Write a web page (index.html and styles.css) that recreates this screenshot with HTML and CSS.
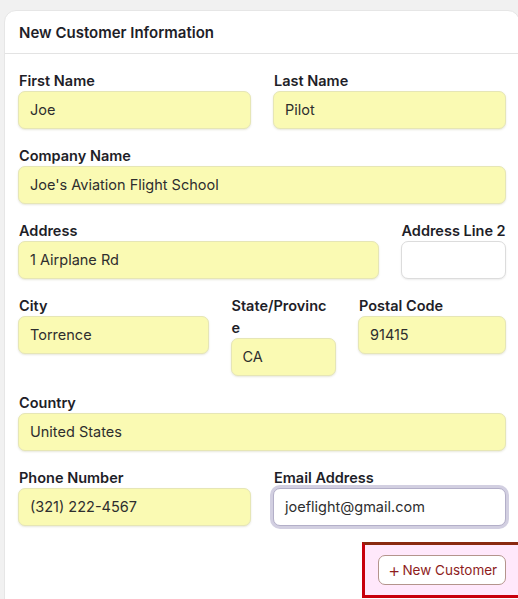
FILE: index.html
```html
<!DOCTYPE html>
<html lang="en">
<head>
<meta charset="utf-8">
<title>New Customer Information</title>
<link rel="stylesheet" href="styles.css">
</head>
<body>
<div class="card">
  <div class="card-header">New Customer Information</div>
  <div class="card-body">
    <div class="row">
      <div class="col col-6">
        <label class="lbl">First Name</label>
        <div class="inp fill">Joe</div>
      </div>
      <div class="col col-6">
        <label class="lbl">Last Name</label>
        <div class="inp fill">Pilot</div>
      </div>
    </div>
    <div class="row">
      <div class="col col-12">
        <label class="lbl">Company Name</label>
        <div class="inp fill">Joe's Aviation Flight School</div>
      </div>
    </div>
    <div class="row">
      <div class="col col-9">
        <label class="lbl">Address</label>
        <div class="inp fill">1 Airplane Rd</div>
      </div>
      <div class="col col-3">
        <label class="lbl nowrap">Address Line 2</label>
        <div class="inp empty"></div>
      </div>
    </div>
    <div class="row">
      <div class="col col-5">
        <label class="lbl">City</label>
        <div class="inp fill">Torrence</div>
      </div>
      <div class="col col-3">
        <label class="lbl">State/Provinc e</label>
        <div class="inp fill">CA</div>
      </div>
      <div class="col col-4">
        <label class="lbl">Postal Code</label>
        <div class="inp fill">91415</div>
      </div>
    </div>
    <div class="row">
      <div class="col col-12">
        <label class="lbl">Country</label>
        <div class="inp fill">United States</div>
      </div>
    </div>
    <div class="row">
      <div class="col col-6">
        <label class="lbl">Phone Number</label>
        <div class="inp fill">(321) 222-4567</div>
      </div>
      <div class="col col-6">
        <label class="lbl">Email Address</label>
        <div class="inp focus">joeflight@gmail.com</div>
      </div>
    </div>
    <div class="actions">
      <div class="highlight">
        <button class="btn" type="button"><span class="plus">+</span>New Customer</button>
      </div>
    </div>
  </div>
</div>
</body>
</html>
```
FILE: styles.css
```css
* { box-sizing: border-box; }
html, body { margin: 0; padding: 0; }
body {
  background: #f1f1f1;
  width: 518px;
  height: 599px;
  overflow: hidden;
  font-family: Inter, "Noto Sans", sans-serif;
  color: #1e1e28;
}
.card {
  margin: 10px 0 0 4px;
  width: 516px;
  height: 620px;
  background: #fff;
  border: 1px solid #e6e6e6;
  border-radius: 12px;
}
.card-header {
  height: 43px;
  padding: 12px 0 0 14px;
  font-size: 15px;
  font-weight: 600;
  line-height: 20px;
  border-bottom: 1px solid #e3e3e3;
  color: #1e1e28;
}
.card-body {
  padding: 16px 13px 0 13px;
}
.row {
  display: flex;
  margin: 0 -11px 16px;
}
.col { padding: 0 11px; }
.col-12 { width: 100%; }
.col-9 { width: 75%; }
.col-6 { width: 50%; }
.col-5 { width: 41.6667%; }
.col-4 { width: 33.3333%; }
.col-3 { width: 25%; }
.lbl {
  display: block;
  font-size: 14.5px;
  font-weight: 600;
  line-height: 22px;
  margin-bottom: -1px;
  padding-left: 1px;
  color: #1e1e28;
}
.nowrap { white-space: nowrap; }
.inp {
  height: 38px;
  border-radius: 7px;
  padding: 0 11px;
  font-size: 14.5px;
  line-height: 36px;
  color: #2e2e2e;
  white-space: nowrap;
  overflow: hidden;
}
.fill {
  background: #fafab3;
  border: 1px solid #e6e6b6;
  box-shadow: 0 1px 2px rgba(120, 120, 60, 0.18);
}
.empty {
  background: #fff;
  border: 1px solid #dcdcdc;
  box-shadow: 0 1px 2px rgba(0, 0, 0, 0.08);
}
.focus {
  background: #fff;
  border: 1px solid #b3afc8;
  box-shadow: 0 0 0 3px #d2cfe1;
}
.actions {
  display: flex;
  justify-content: flex-end;
}
.highlight {
  margin-right: -17px;
  background: #ffe8fb;
  border: 3px solid #c8000c;
  border-top-color: #8a2a10;
  padding: 10px 14px 10px 13px;
}
.btn {
  display: flex;
  align-items: center;
  height: 30px;
  width: 128px;
  padding: 0 0 0 9px;
  background: #fff;
  border: 1px solid #b4948c;
  border-radius: 7px;
  font-family: Inter, "Noto Sans", sans-serif;
  font-size: 13.5px;
  color: #8e1c1c;
}
.plus {
  font-size: 19px;
  font-weight: 300;
  margin-right: 2px;
  line-height: 1;
}
```
